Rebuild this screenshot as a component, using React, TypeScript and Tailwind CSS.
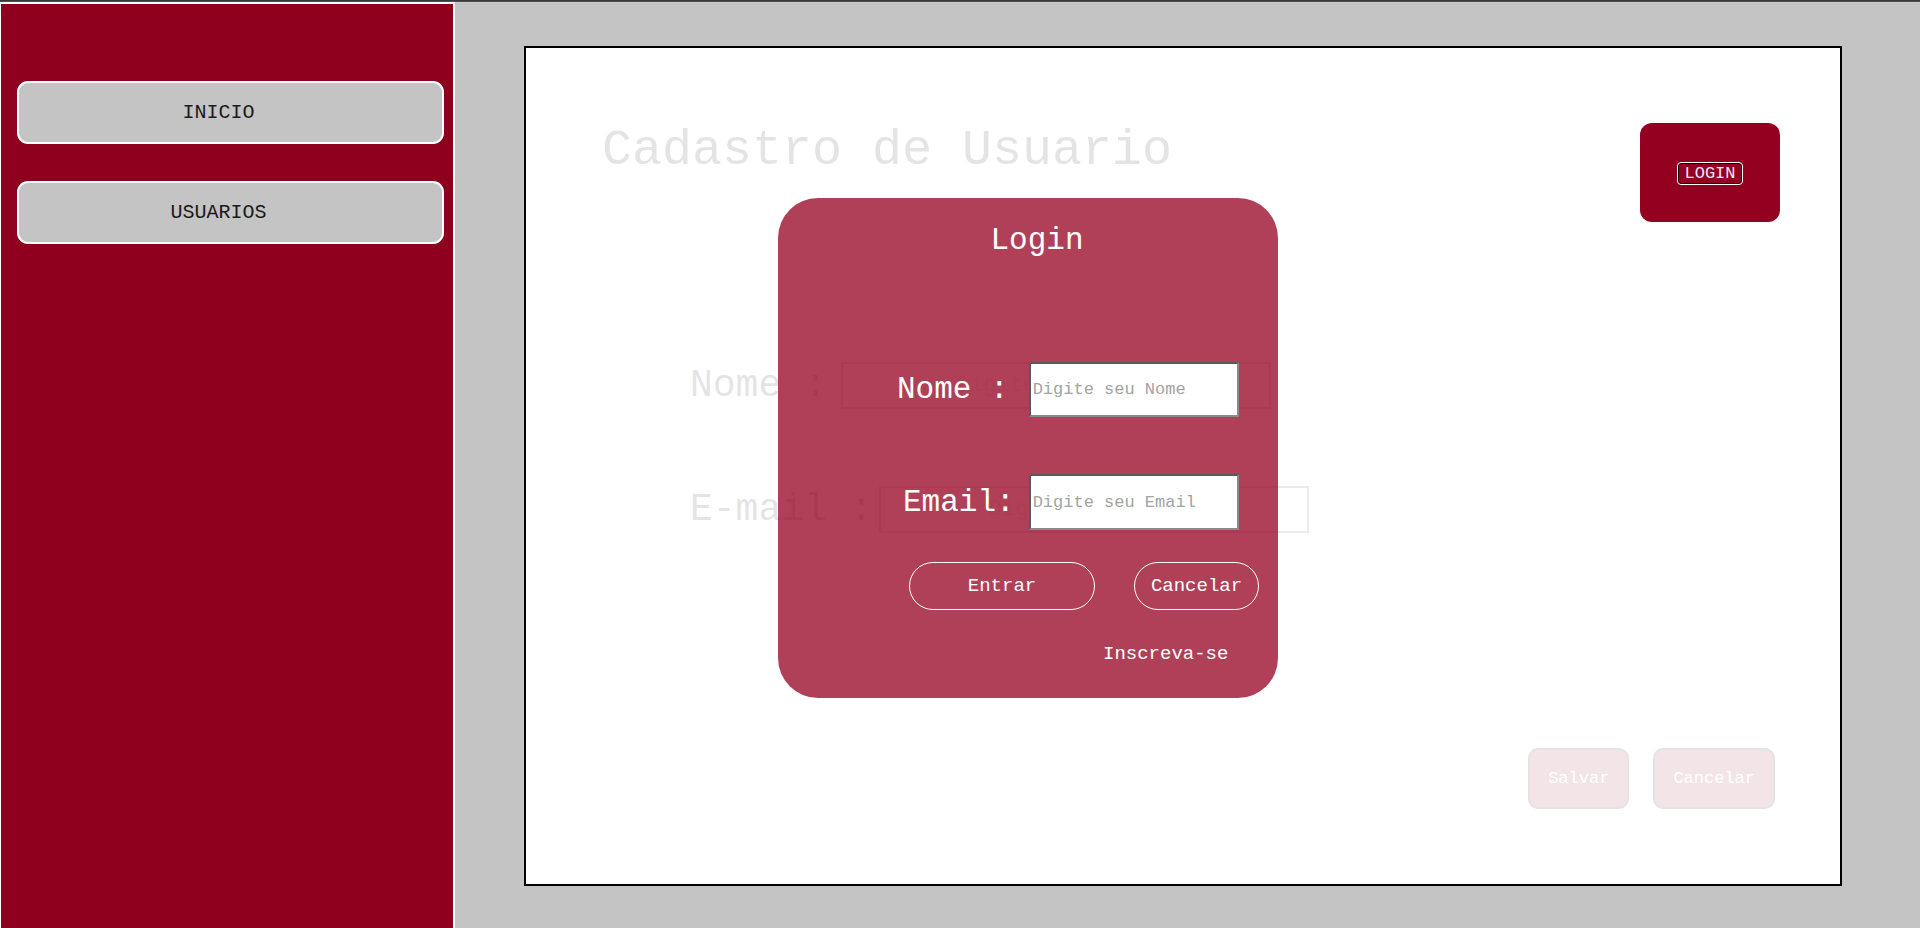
import React from "react";

const mono = "font-['Courier_New','Nimbus_Mono_PS','FreeMono','Liberation_Mono',monospace]";

function SideButton({ label }: { label: string }) {
  return (
    <button
      className={`${mono} ml-[16px] flex h-[63px] w-[427px] items-center justify-center rounded-[11px] border-2 border-white bg-[#c4c4c4] pr-[24px] text-[20px] text-[#1a1a1a]`}
    >
      {label}
    </button>
  );
}

export default function App() {
  return (
    <div className={`${mono} relative flex h-[928px] w-[1920px] flex-col overflow-hidden bg-[#c4c4c4]`}>
      <div className="h-[2px] w-full bg-gradient-to-b from-[#2e2e2e] to-[#5a5a5a]" />
      <div className="flex flex-1">
        {/* Sidebar */}
        <aside className="flex w-[455px] flex-col gap-[37px] border-t-2 border-r-2 border-l border-white bg-[#8f001e] pt-[77px]">
          <SideButton label="INICIO" />
          <SideButton label="USUARIOS" />
        </aside>

        {/* Main */}
        <main className="flex-1 pt-[44px] pl-[69px]">
          <div className="relative flex h-[840px] w-[1318px] flex-col border-2 border-black bg-white">
            {/* Header */}
            <div className="flex items-start justify-between pt-[75px] pr-[60px] pl-[76px]">
              <h1 className="mt-[3px] text-[50px] leading-[50px] font-normal text-black opacity-10">
                Cadastro de Usuario
              </h1>
              <div className="flex h-[99px] w-[140px] items-center justify-center rounded-[12px] bg-[#94001f]">
                <button className="mt-[1px] rounded-[4px] border border-white bg-[#94001f] px-[6px] py-[1px] text-[17px] leading-[19px] text-[#ece6ff] shadow-[inset_0_0_0_1px_#000]">
                  LOGIN
                </button>
              </div>
            </div>

            {/* Form rows (faded) */}
            <div className="mt-[140px] flex flex-col gap-[77px] pl-[164px] opacity-10">
              <div className="flex items-center">
                <span className="text-[38px] leading-none text-black">Nome :</span>
                <input
                  className="ml-[14px] h-[47px] w-[430px] border-2 border-[#444] bg-white text-center text-[22px] outline-none"
                  placeholder="Digite seu Nome"
                />
              </div>
              <div className="flex items-center">
                <span className="text-[38px] leading-none text-black">E-mail :</span>
                <input
                  className="ml-[7px] h-[47px] w-[430px] border-2 border-[#444] bg-white text-center text-[22px] outline-none"
                  placeholder="Digite seu Email"
                />
              </div>
            </div>

            {/* Bottom buttons (faded) */}
            <div className="mt-auto flex justify-end gap-[24px] pr-[65px] pb-[75px] opacity-10">
              <button className="h-[61px] rounded-[10px] border-2 border-black bg-[#8f001e] px-[18px] text-[17px] text-white">
                Salvar
              </button>
              <button className="h-[61px] rounded-[10px] border-2 border-black bg-[#8f001e] px-[18px] text-[17px] text-white">
                Cancelar
              </button>
            </div>
          </div>
        </main>
      </div>

      {/* Login modal overlay */}
      <div className="absolute top-[198px] left-[778px] flex h-[500px] w-[500px] flex-col rounded-[40px] bg-[rgba(150,0,32,0.75)] text-white">
        <div className="mt-[27px] pl-[18px] text-center text-[31px] leading-[31px]">Login</div>

        <div className="mt-[106px] flex items-center pl-[119px]">
          <span className="text-[31px] leading-none">Nome :</span>
          <input
            className="ml-[20px] h-[55px] w-[210px] border-2 border-t-[#5a5a5a] border-r-[#8a8a8a] border-b-[#8a8a8a] border-l-[#5a5a5a] bg-white px-[2px] text-[17px] text-black outline-none placeholder:text-[#a3a3a3]"
            placeholder="Digite seu Nome"
          />
        </div>

        <div className="mt-[57px] flex items-center pl-[125px]">
          <span className="text-[31px] leading-none">Email:</span>
          <input
            className="ml-[14px] h-[56px] w-[210px] border-2 border-t-[#5a5a5a] border-r-[#8a8a8a] border-b-[#8a8a8a] border-l-[#5a5a5a] bg-white px-[2px] text-[17px] text-black outline-none placeholder:text-[#a3a3a3]"
            placeholder="Digite seu Email"
          />
        </div>

        <div className="mt-[32px] flex pl-[131px]">
          <button className="h-[48px] w-[186px] rounded-full border border-white text-[19px] text-white">
            Entrar
          </button>
          <button className="ml-[39px] h-[48px] w-[125px] rounded-full border border-white text-[19px] text-white">
            Cancelar
          </button>
        </div>

        <div className="mt-[35px] pl-[325px] text-[19px] leading-[19px] text-white">Inscreva-se</div>
      </div>
    </div>
  );
}
